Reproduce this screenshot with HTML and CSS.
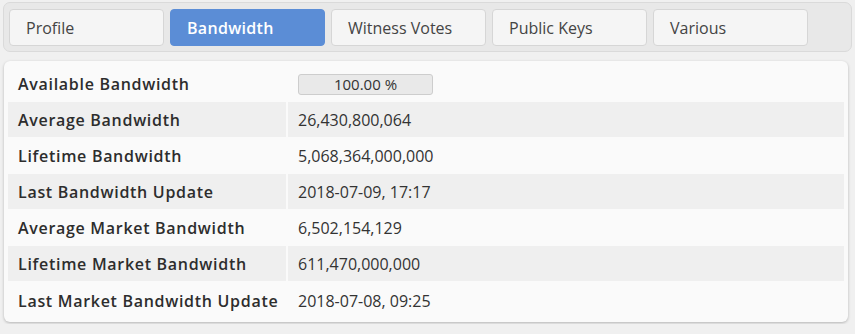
FILE: index.html
```html
<!DOCTYPE html>
<html lang="en">
<head>
<meta charset="UTF-8" />
<title>Account</title>
<link rel="stylesheet" href="styles.css">
</head>
<body>
<div class="tabs">
    <a class="tab">Profile</a>
    <a class="tab active">Bandwidth</a>
    <a class="tab">Witness Votes</a>
    <a class="tab">Public Keys</a>
    <a class="tab">Various</a>
</div>
<div class="panel">
    <table class="info">
        <tr>
            <th>Available Bandwidth</th>
            <td><div class="bar">100.00 %</div></td>
        </tr>
        <tr class="odd">
            <th>Average Bandwidth</th>
            <td>26,430,800,064</td>
        </tr>
        <tr>
            <th>Lifetime Bandwidth</th>
            <td>5,068,364,000,000</td>
        </tr>
        <tr class="odd">
            <th>Last Bandwidth Update</th>
            <td>2018-07-09, 17:17</td>
        </tr>
        <tr>
            <th>Average Market Bandwidth</th>
            <td>6,502,154,129</td>
        </tr>
        <tr class="odd">
            <th>Lifetime Market Bandwidth</th>
            <td>611,470,000,000</td>
        </tr>
        <tr>
            <th>Last Market Bandwidth Update</th>
            <td>2018-07-08, 09:25</td>
        </tr>
    </table>
</div>
</body>
</html>
```

FILE: styles.css
```css
*{margin:0;padding:0;box-sizing:border-box;}
body{background:#f0f0f0;padding:2px 3px;font:400 16px/1.4 "Open Sans",Arial,sans-serif;color:#333;}
.tabs{display:flex;gap:6px;padding:6px 5px 5px;background:#e8e8e8;border:1px solid #dadada;border-radius:7px;}
.tab{display:block;width:155px;height:37px;line-height:37px;padding:0 16px;background:#f5f5f5;border:1px solid #d6d6d6;border-radius:4px;color:#444;cursor:pointer;}
.tab.active{background:#5b8dd6;border-color:#5b8dd6;color:#fff;font-weight:600;letter-spacing:.3px;}
.panel{margin:9px 4px 0 1px;padding:4px;background:#fafafa;border-radius:6px;box-shadow:0 1px 3px rgba(0,0,0,.25);}
.info{width:100%;border-collapse:collapse;table-layout:fixed;}
.info tr{height:36px;}
.info th{width:279px;padding:2px 0 0 10px;text-align:left;white-space:nowrap;font-weight:600;letter-spacing:.7px;color:#2d2d2d;border-right:2px solid #fafafa;}
.info td{padding:2px 10px 0;color:#333;white-space:nowrap;}
.info th,.info td{border-top:1px solid #fafafa;}
.info tr.odd{background:#efefef;}
.bar{width:135px;height:21px;line-height:19px;margin-top:-1px;background:#e9e9e9;border:1px solid #cdcdcd;border-radius:3px;text-align:center;font-size:15px;}
```
